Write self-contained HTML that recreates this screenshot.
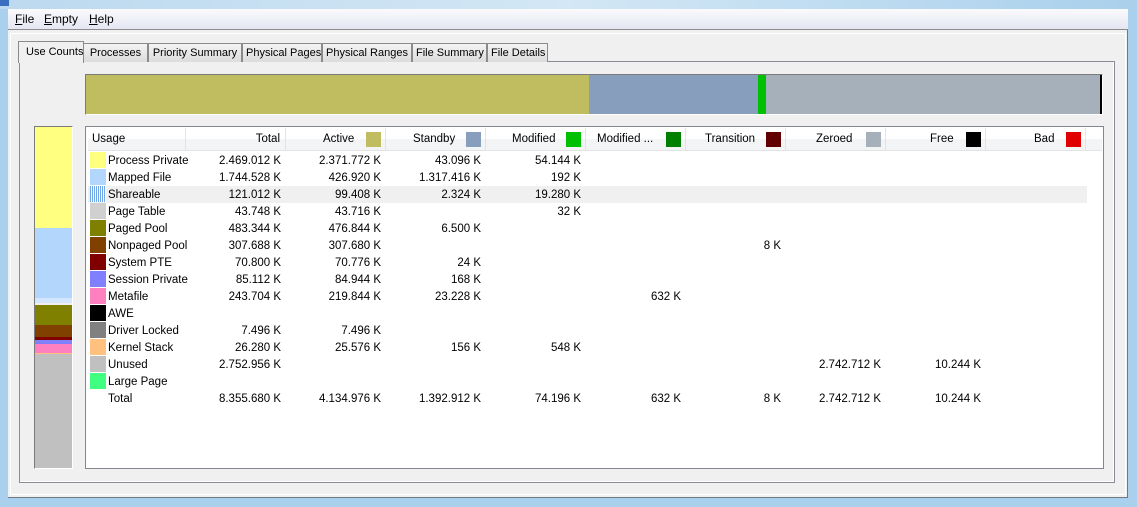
<!DOCTYPE html>
<html><head><meta charset="utf-8"><style>
*{margin:0;padding:0;box-sizing:border-box}
body{width:1137px;height:507px;overflow:hidden;position:relative;background:#a9d0ec;font-family:"Liberation Sans",sans-serif;font-size:11.5px;color:#000}
.a{position:absolute}
.row{position:absolute;left:88px;height:17px;display:flex;line-height:18px;white-space:nowrap}
.row div{width:100px;text-align:right;padding-right:5px}
.row div.u{width:98px;text-align:left;padding-left:20px;position:relative;padding-right:0}
.sw{position:absolute;left:2px;top:0;width:16px;height:16px}
.hd{position:absolute;top:128px;height:22px;line-height:23px;white-space:nowrap;border-right:1px solid #e3e3e3;background:linear-gradient(#fff 0,#fff 50%,#f3f4f6 50%,#f3f4f6);}
.hs{position:absolute;top:4px;width:15px;height:15px}
.tab{position:absolute;top:43px;height:19px;border:1px solid #8a8a8a;border-bottom:none;background:linear-gradient(#f4f4f4,#dcdcdc);line-height:19px;padding:0 3px;font-size:11px;white-space:nowrap;overflow:hidden;text-align:center}
</style></head><body>
<div class="a" style="left:0;top:0;width:1137px;height:9px;background:linear-gradient(90deg,#bcd9ef,#d3e7f5,#a9d0ec)"></div>
<div class="a" style="left:0;top:0;width:9px;height:6px;background:#3a6fc0"></div>
<div class="a" style="left:8px;top:9px;width:1120px;height:21px;background:linear-gradient(#fbfbfd,#e4e6f2);border-bottom:1px solid #8d8d8d"></div>
<div class="a" style="left:15px;top:12px;font-size:12px"><u>F</u>ile</div>
<div class="a" style="left:44px;top:12px;font-size:12px"><u>E</u>mpty</div>
<div class="a" style="left:89px;top:12px;font-size:12px"><u>H</u>elp</div>
<div class="a" style="left:8px;top:30px;width:1120px;height:468px;background:#f0f0f0;border-right:1px solid #6f7a85;border-bottom:1px solid #6f7a85"></div>
<div class="a" style="left:10px;top:33px;width:1116px;height:462px;border:1px solid #fff"></div>
<div class="a" style="left:19px;top:61px;width:1096px;height:422px;border:1px solid #898c95;background:#f0f0f0"></div>
<div class="a" style="left:20px;top:62px;width:1094px;height:420px;border-right:1px solid #fff;border-bottom:1px solid #fff"></div>
<div class="tab" style="left:83px;width:65px">Processes</div>
<div class="tab" style="left:148px;width:94px">Priority Summary</div>
<div class="tab" style="left:242px;width:80px">Physical Pages</div>
<div class="tab" style="left:322px;width:90px">Physical Ranges</div>
<div class="tab" style="left:412px;width:75px">File Summary</div>
<div class="tab" style="left:487px;width:61px">File Details</div>
<div class="a" style="left:18px;top:41px;width:66px;height:22px;border:1px solid #8a8a8a;border-bottom:none;background:#f0f0f0;padding:4px 0 0 7px;font-size:11px;white-space:nowrap">Use Counts</div>
<div class="a" style="left:85px;top:74px;width:1018px;height:41px;border:1px solid #7b7b7b;border-right-color:#fff;border-bottom-color:#fff;display:flex">
<div style="width:503px;background:#bfbd60"></div><div style="width:169px;background:#879fbc"></div><div style="width:8px;background:#00c000"></div><div style="width:334px;background:#a6b0bb"></div><div style="width:2px;background:#000"></div></div>
<div class="a" style="left:34px;top:126px;width:39px;height:343px;border:1px solid #7b7b7b;border-right-color:#fff;border-bottom-color:#fff;display:flex;flex-direction:column">
<div style="height:101px;background:#ffff80"></div><div style="height:70px;background:#b2d6fc"></div><div style="height:5px;background:#d4e6fb"></div><div style="height:2px;background:#f0f0f0"></div><div style="height:20px;background:#808000"></div><div style="height:12px;background:#804000"></div><div style="height:3px;background:#800000"></div><div style="height:4px;background:#8080ff"></div><div style="height:9px;background:#ff80c0"></div><div style="height:1px;background:#ffc080"></div><div style="flex:1;background:#c0c0c0"></div></div>
<div class="a" style="left:85px;top:126px;width:1019px;height:343px;border:1px solid #828790;background:#fff"></div>
<div class="hd" style="left:88px;width:98px;padding-left:4px">Usage</div>
<div class="hd" style="left:186px;width:100px;text-align:right;padding-right:5px">Total</div>
<div class="hd" style="left:286px;width:100px;padding-left:37px">Active<span class="hs" style="left:80px;background:#bfbd60"></span></div>
<div class="hd" style="left:386px;width:100px;padding-left:27px">Standby<span class="hs" style="left:80px;background:#879fbc"></span></div>
<div class="hd" style="left:486px;width:100px;padding-left:26px">Modified<span class="hs" style="left:80px;background:#00c000"></span></div>
<div class="hd" style="left:586px;width:100px;padding-left:11px">Modified ...<span class="hs" style="left:80px;background:#008000"></span></div>
<div class="hd" style="left:686px;width:100px;padding-left:19px">Transition<span class="hs" style="left:80px;background:#600000"></span></div>
<div class="hd" style="left:786px;width:100px;padding-left:30px">Zeroed<span class="hs" style="left:80px;background:#a6b0bb"></span></div>
<div class="hd" style="left:886px;width:100px;padding-left:44px">Free<span class="hs" style="left:80px;background:#000"></span></div>
<div class="hd" style="left:986px;width:100px;padding-left:48px">Bad<span class="hs" style="left:80px;background:#e00000"></span></div>
<div class="a" style="left:1086px;top:128px;width:16px;height:22px;background:linear-gradient(#fff 50%,#f3f4f6 50%)"></div>
<div class="a" style="left:88px;top:150px;width:1014px;height:1px;background:#e3e3e3"></div>
<div class="a" style="left:88px;top:186px;width:999px;height:17px;background:#f0f0f0"></div>

<div class="row" style="top:152px"><div class="u"><span class="sw" style="background:#ffff80"></span>Process Private</div><div>2.469.012 K</div><div>2.371.772 K</div><div>43.096 K</div><div>54.144 K</div></div>
<div class="row" style="top:169px"><div class="u"><span class="sw" style="background:#b2d6fc"></span>Mapped File</div><div>1.744.528 K</div><div>426.920 K</div><div>1.317.416 K</div><div>192 K</div></div>
<div class="row" style="top:186px"><div class="u"><span class="sw" style="background:repeating-linear-gradient(90deg,#6fa8e8 0 1px,#fff 1px 2px)"></span>Shareable</div><div>121.012 K</div><div>99.408 K</div><div>2.324 K</div><div>19.280 K</div></div>
<div class="row" style="top:203px"><div class="u"><span class="sw" style="background:#d0d0d0"></span>Page Table</div><div>43.748 K</div><div>43.716 K</div><div></div><div>32 K</div></div>
<div class="row" style="top:220px"><div class="u"><span class="sw" style="background:#808000"></span>Paged Pool</div><div>483.344 K</div><div>476.844 K</div><div>6.500 K</div></div>
<div class="row" style="top:237px"><div class="u"><span class="sw" style="background:#804000"></span>Nonpaged Pool</div><div>307.688 K</div><div>307.680 K</div><div></div><div></div><div></div><div>8 K</div></div>
<div class="row" style="top:254px"><div class="u"><span class="sw" style="background:#800000"></span>System PTE</div><div>70.800 K</div><div>70.776 K</div><div>24 K</div></div>
<div class="row" style="top:271px"><div class="u"><span class="sw" style="background:#8080ff"></span>Session Private</div><div>85.112 K</div><div>84.944 K</div><div>168 K</div></div>
<div class="row" style="top:288px"><div class="u"><span class="sw" style="background:#ff80c0"></span>Metafile</div><div>243.704 K</div><div>219.844 K</div><div>23.228 K</div><div></div><div>632 K</div></div>
<div class="row" style="top:305px"><div class="u"><span class="sw" style="background:#000"></span>AWE</div></div>
<div class="row" style="top:322px"><div class="u"><span class="sw" style="background:#808080"></span>Driver Locked</div><div>7.496 K</div><div>7.496 K</div></div>
<div class="row" style="top:339px"><div class="u"><span class="sw" style="background:#ffc080"></span>Kernel Stack</div><div>26.280 K</div><div>25.576 K</div><div>156 K</div><div>548 K</div></div>
<div class="row" style="top:356px"><div class="u"><span class="sw" style="background:#c0c0c0"></span>Unused</div><div>2.752.956 K</div><div></div><div></div><div></div><div></div><div></div><div>2.742.712 K</div><div>10.244 K</div></div>
<div class="row" style="top:373px"><div class="u"><span class="sw" style="background:#40ff80"></span>Large Page</div></div>
<div class="row" style="top:390px"><div class="u">Total</div><div>8.355.680 K</div><div>4.134.976 K</div><div>1.392.912 K</div><div>74.196 K</div><div>632 K</div><div>8 K</div><div>2.742.712 K</div><div>10.244 K</div></div>
</body></html>
